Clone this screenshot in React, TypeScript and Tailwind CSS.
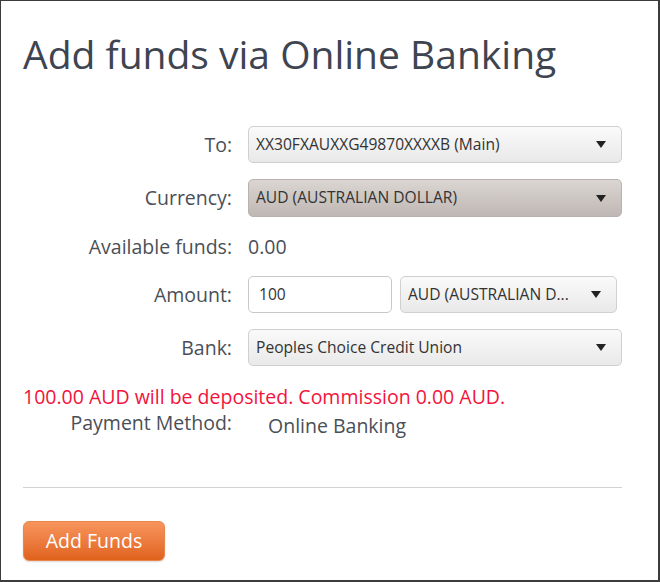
import React from 'react';

const font = { fontFamily: '"Open Sans", "Liberation Sans", sans-serif' };

function Arrow() {
  return (
    <svg width="10" height="7" viewBox="0 0 10 7" className="shrink-0">
      <path d="M0 0 H10 L5 7 Z" fill="#222" />
    </svg>
  );
}

function Select({ value, dark, className }: { value: string; dark?: boolean; className?: string }) {
  return (
    <div
      className={
        'flex items-center justify-between h-[37px] pl-[7px] pr-[15px] rounded-[5px] border text-[15.6px] text-[#333] ' +
        (dark
          ? 'border-[#b9b2ae] bg-gradient-to-b from-[#dbd6d3] to-[#bfb7b3] '
          : 'border-[#d0d0d0] bg-gradient-to-b from-[#fafafa] to-[#e9e9e9] ') +
        (className ?? '')
      }
    >
      <span className="truncate">{value}</span>
      <Arrow />
    </div>
  );
}

function Label({ children }: { children: React.ReactNode }) {
  return <div className="text-right text-[19.5px] leading-[26px] text-[#4a4f57] self-center">{children}</div>;
}

export default function App() {
  return (
    <div
      style={font}
      className="w-[660px] h-[582px] bg-white border-t border-l border-r-2 border-b-2 border-[#3c3c3c] pl-[22px] pr-[36px] pt-[26px]"
    >
      <h1 className="text-[39px] leading-[54px] text-[#3e4450]">Add funds via Online Banking</h1>

      <div className="mt-[45px] grid grid-cols-[209px_374px] gap-x-4 gap-y-4">
        <Label>To:</Label>
        <Select value="XX30FXAUXXG49870XXXXB (Main)" />

        <Label>Currency:</Label>
        <Select value="AUD (AUSTRALIAN DOLLAR)" dark className="h-[38px]" />

        <Label>Available funds:</Label>
        <div className="h-[27px] flex items-center text-[19.5px] text-[#4a4f57]">0.00</div>

        <Label>Amount:</Label>
        <div className="flex gap-2 pr-[5px]">
          <div className="w-[144px] h-[37px] flex items-center px-[10px] rounded-[5px] border border-[#c8c8c8] bg-white text-[15.6px] text-[#333]">
            100
          </div>
          <Select value="AUD (AUSTRALIAN D..." className="flex-1" />
        </div>

        <Label>Bank:</Label>
        <Select value="Peoples Choice Credit Union" />
      </div>

      <p className="mt-[18px] text-[19.5px] leading-[26px] text-[#f2133c]">
        100.00 AUD will be deposited. Commission 0.00 AUD.
      </p>
      <div className="flex text-[19.5px] leading-[26px] text-[#4a4f57]">
        <div className="w-[209px] text-right">Payment Method:</div>
        <div className="ml-[36px] mt-[3px]">Online Banking</div>
      </div>

      <hr className="mt-[48px] border-0 border-t border-[#d2d2d2]" />

      <button className="mt-[33px] w-[142px] h-[40px] rounded-[6px] border border-[#e8864e] bg-gradient-to-b from-[#f7955c] to-[#e0621a] text-white text-[19.5px] shadow-[0_1px_2px_rgba(0,0,0,0.15)]">
        Add Funds
      </button>
    </div>
  );
}
